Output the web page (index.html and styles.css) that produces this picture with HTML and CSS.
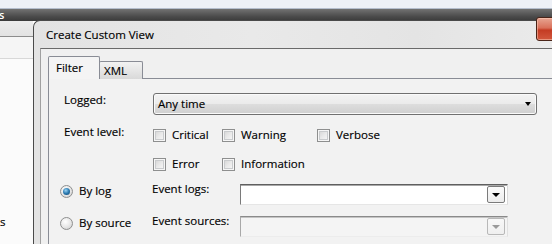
FILE: index.html
```html
<!DOCTYPE html>
<html>
<head>
<meta charset="utf-8">
<link rel="stylesheet" href="styles.css">
</head>
<body>
<div class="desk">
  <div class="app">
    <div class="topstrip"></div>
    <div class="darkbar"><span class="bar-s">s</span></div>
    <div class="pane">
      <div class="pane-head"></div>
      <div class="pane-row"></div>
      <div class="pane-body"><span class="pane-s">s</span></div>
    </div>
  </div>

  <div class="dialog">
    <div class="titlebar">
      <span class="title">Create Custom View</span>
      <div class="close"></div>
    </div>
    <div class="client">
      <div class="tabs">
        <div class="tab active">Filter</div>
        <div class="tab">XML</div>
      </div>
      <div class="panel">
        <div class="row r1">
          <div class="lbl">Logged:</div>
          <div class="dropdown wide">
            <span class="dd-text">Any time</span>
            <span class="dd-arrow"></span>
          </div>
        </div>
        <div class="row r2">
          <div class="lbl">Event level:</div>
          <div class="checks">
            <label class="chk c1"><span class="box"></span>Critical</label>
            <label class="chk c2"><span class="box"></span>Warning</label>
            <label class="chk"><span class="box"></span>Verbose</label>
          </div>
        </div>
        <div class="row r3">
          <div class="lbl"></div>
          <div class="checks">
            <label class="chk c1"><span class="box"></span>Error</label>
            <label class="chk c2"><span class="box"></span>Information</label>
          </div>
        </div>
        <div class="row r4">
          <div class="radio-cell"><span class="radio on"></span>By log</div>
          <div class="lbl2">Event logs:</div>
          <div class="combo">
            <span class="combo-btn"><span class="tri"></span></span>
          </div>
        </div>
        <div class="row r5">
          <div class="radio-cell"><span class="radio"></span>By source</div>
          <div class="lbl2">Event sources:</div>
          <div class="combo disabled">
            <span class="combo-btn"><span class="tri"></span></span>
          </div>
        </div>
      </div>
    </div>
  </div>
</div>
</body>
</html>
```

FILE: styles.css
```css
html, body {
  margin: 0;
  padding: 0;
  width: 552px;
  height: 244px;
  overflow: hidden;
  background: #ffffff;
}

.desk {
  position: relative;
  width: 552px;
  height: 244px;
  overflow: hidden;
  font-family: "Open Sans", "Noto Sans", sans-serif;
  font-size: 11.5px;
  color: #000;
  -webkit-text-stroke: 0.15px #000;
}

/* background application */
.app {
  display: flex;
  flex-direction: column;
  height: 244px;
}
.topstrip {
  height: 8px;
  background: #edf0f6;
  border-bottom: 1px solid #b4bdcc;
}
.darkbar {
  height: 12px;
  background: linear-gradient(#727272, #4c4c4c 60%, #3a3a3a);
  color: #fff;
  display: flex;
  align-items: center;
  line-height: 12px;
  -webkit-text-stroke: 0;
}
.bar-s {
  margin-left: -1px;
  font-size: 11px;
  font-weight: 600;
}
.pane {
  width: 33px;
  flex: 1;
  display: flex;
  flex-direction: column;
}
.pane-head {
  height: 15px;
  background: linear-gradient(#ececec, #e2e2e2);
  border-bottom: 1px solid #8c8c8c;
}
.pane-row {
  height: 21px;
  background: #f5f5f5;
  border-bottom: 1px solid #d8d8d8;
}
.pane-body {
  flex: 1;
  background: #fbfbfb;
  display: flex;
  flex-direction: column;
}
.pane-s {
  margin-top: 156px;
  line-height: 14px;
}

/* dialog window */
.dialog {
  position: absolute;
  left: 33px;
  top: 20px;
  width: 540px;
  height: 240px;
  border: 1px solid #4a4a4a;
  border-right: none;
  border-bottom: none;
  border-radius: 7px 0 0 0;
  background: linear-gradient(90deg, #e3e3e3, #e9e9e9 40%, #e4e4e4 70%, #ececec);
  display: flex;
  flex-direction: column;
  padding-left: 6px;
}
.titlebar {
  height: 27px;
  position: relative;
  display: flex;
  align-items: center;
}
.title {
  margin-left: 6px;
  margin-top: 0;
}
.close {
  position: absolute;
  left: 496px;
  top: -4px;
  width: 32px;
  height: 22px;
  border: 1px solid #4a2418;
  border-radius: 3px;
  background: linear-gradient(#e7a592, #d9705a 45%, #c43b23 55%, #d2583e);
  box-shadow: inset 0 0 0 1px rgba(255, 210, 190, 0.5);
}

.client {
  flex: 1;
  background: #f0f0f0;
  border-left: 1px solid #a0a0a0;
  border-top: 1px solid #6a6a6a;
  padding: 7px 0 0 7px;
  display: flex;
  flex-direction: column;
}

.tabs {
  display: flex;
  align-items: flex-end;
  height: 23px;
  margin-bottom: -1px;
  position: relative;
  z-index: 1;
}
.tab {
  border: 1px solid #898c95;
  border-bottom: none;
  border-radius: 2px 2px 0 0;
  background: linear-gradient(#f2f2f2, #e6e6e6 50%, #d9d9d9);
  height: 18px;
  width: 44px;
  padding-left: 4px;
  box-sizing: border-box;
  line-height: 18px;
  margin-left: -1px;
}
.tab.active {
  background: #f4f4f4;
  height: 23px;
  width: 52px;
  padding-left: 7px;
  line-height: 22px;
  margin-left: 0;
  position: relative;
  z-index: 2;
}

.panel {
  flex: 1;
  border: 1px solid #898c95;
  border-right: none;
  background: #f2f2f2;
  padding: 14px 0 0 12px;
  display: flex;
  flex-direction: column;
}

.row {
  display: flex;
  align-items: flex-start;
  height: 22px;
  line-height: 14px;
}
.r2 { margin-top: 8px; }
.r3 { margin-top: 7px; }
.r4 { margin-top: 10px; }
.r5 { margin-top: 10px; }

.lbl {
  width: 89px;
  padding-left: 3px;
}
.r2 .lbl { margin-top: 2px; }
.lbl2 {
  width: 88px;
  margin-top: -2px;
}

.dropdown {
  height: 22px;
  box-sizing: border-box;
  border: 1px solid #707070;
  border-radius: 3px;
  background: linear-gradient(#f3f3f3, #ebebeb 48%, #dddddd 52%, #cfcfcf);
  box-shadow: inset 0 0 0 1px #fafafa;
  display: flex;
  align-items: center;
  position: relative;
}
.dropdown.wide { width: 384px; }
.dd-text { margin-left: 4px; }
.dd-arrow {
  position: absolute;
  right: 5px;
  top: 8px;
  width: 0;
  height: 0;
  border-left: 3.5px solid transparent;
  border-right: 3.5px solid transparent;
  border-top: 4px solid #000;
}

.checks {
  display: flex;
  align-items: center;
  margin-top: 5px;
}
.chk {
  display: flex;
  align-items: center;
}
.chk.c1 { width: 69px; }
.chk.c2 { width: 95px; }
.box {
  width: 13px;
  height: 13px;
  box-sizing: border-box;
  border: 1px solid #8e8f8f;
  background: linear-gradient(135deg, #d0d0d0, #e9e9e9 50%, #fbfbfb);
  box-shadow: inset 0 0 0 1px #f6f6f6, inset 0 0 0 2px #c9cbcd;
  margin-right: 6px;
}

.radio-cell {
  width: 92px;
  display: flex;
  align-items: center;
  margin-left: -1px;
  margin-top: 0;
}
.radio {
  width: 13px;
  height: 13px;
  box-sizing: border-box;
  border-radius: 50%;
  border: 1px solid #8e8f8f;
  background: radial-gradient(circle at 40% 35%, #ffffff, #e6e6e6 55%, #c8c8c8);
  margin-right: 6px;
  position: relative;
}
.radio.on::after {
  content: "";
  position: absolute;
  left: 2px;
  top: 2px;
  width: 7px;
  height: 7px;
  border-radius: 50%;
  background: radial-gradient(circle at 40% 35%, #9ad4f5, #2a79b0 50%, #10406a);
}

.combo {
  width: 268px;
  height: 21px;
  box-sizing: border-box;
  border: 1px solid;
  border-color: #5f5f5f #dadada #e6e6e6 #7a7a7a;
  box-shadow: inset 0 1px 0 #a8a8a8;
  background: #ffffff;
  position: relative;
}
.combo.disabled {
  background: #f4f4f4;
  border-color: #8a8a8a #e0e0e0 #ececec #a8a8a8;
  box-shadow: inset 0 1px 0 #c4c4c4;
}
.combo-btn {
  position: absolute;
  right: 2px;
  top: 1px;
  width: 18px;
  height: 17px;
  box-sizing: border-box;
  border: 1px solid #7b7b7b;
  border-radius: 2px;
  background: linear-gradient(#fbfbfb, #ececec);
  display: flex;
  align-items: center;
  justify-content: center;
}
.tri {
  width: 0;
  height: 0;
  border-left: 4px solid transparent;
  border-right: 4px solid transparent;
  border-top: 4px solid #000;
  margin-top: 1px;
}
.combo.disabled .combo-btn {
  border-color: #b8b8b8;
  background: linear-gradient(#f8f8f8, #efefef);
}
.combo.disabled .tri {
  border-top-color: #9a9a9a;
}
```
